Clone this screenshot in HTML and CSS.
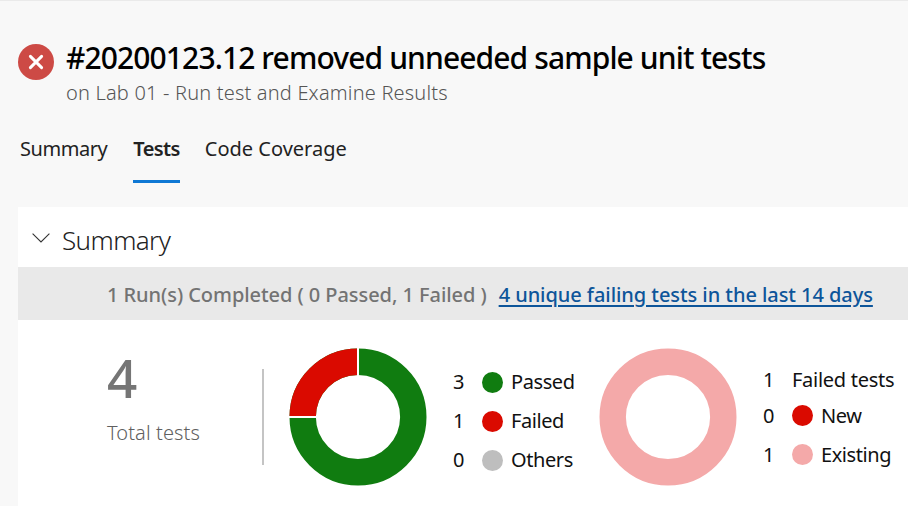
FILE: index.html
```
<!DOCTYPE html>
<html lang="en">
<head>
<meta charset="utf-8">
<title>Test results</title>
<link rel="stylesheet" href="styles.css">
</head>
<body>
<header class="header">
  <svg class="status" viewBox="0 0 36 36"><circle cx="18" cy="18" r="18" fill="#cd4a45"/><path d="M12.4 12.4 23.6 23.6M23.6 12.4 12.4 23.6" stroke="#fff" stroke-width="3" stroke-linecap="round"/></svg>
  <div class="heading">
    <h1 class="title">#20200123.12 removed unneeded sample unit tests</h1>
    <p class="subtitle">on Lab 01 - Run test and Examine Results</p>
  </div>
</header>
<nav class="tabs">
  <a class="tab tab-summary">Summary</a>
  <a class="tab tab-active">Tests</a>
  <a class="tab tab-coverage">Code Coverage</a>
</nav>
<main class="card">
  <div class="section">
    <svg class="chevron" viewBox="0 0 18 10"><path d="M.6.7 9 9 17.4.7" fill="none" stroke="#333" stroke-width="1.1"/></svg>
    <h2 class="section-title">Summary</h2>
  </div>
  <div class="band">
    <span class="runs">1 Run(s) Completed ( 0 Passed, 1 Failed )</span>
    <a class="link">4 unique failing tests in the last 14 days</a>
  </div>
  <div class="stats">
    <div class="total">
      <div class="total-number">4</div>
      <div class="total-label">Total tests</div>
    </div>
    <svg class="donut" viewBox="0 0 138 138">
      <circle cx="69" cy="69" r="55.3" fill="none" stroke="#107c10" stroke-width="26.4"/>
      <path d="M13.7 69A55.3 55.3 0 0 1 69 13.7" fill="none" stroke="#da0a00" stroke-width="26.4"/>
      <path d="M69 0V28M0 69H28" stroke="#fff" stroke-width="2"/>
    </svg>
    <div class="legend">
      <div class="row"><span class="count">3</span><i class="dot passed"></i><span class="name">Passed</span></div>
      <div class="row"><span class="count">1</span><i class="dot failed"></i><span class="name">Failed</span></div>
      <div class="row"><span class="count">0</span><i class="dot others"></i><span class="name">Others</span></div>
    </div>
    <svg class="donut" viewBox="0 0 138 138"><circle cx="69" cy="69" r="55.3" fill="none" stroke="#f4a9a9" stroke-width="26.4"/></svg>
    <div class="legend legend-failed">
      <div class="row row-head"><span class="count">1</span><span class="name">Failed tests</span></div>
      <div class="row"><span class="count">0</span><i class="dot failed"></i><span class="name">New</span></div>
      <div class="row"><span class="count">1</span><i class="dot existing"></i><span class="name">Existing</span></div>
    </div>
  </div>
</main>
</body>
</html>
```
FILE: styles.css
```
* { box-sizing: border-box; }
body {
  margin: 0;
  height: 506px;
  overflow: hidden;
  background: #f8f8f8;
  border-top: 1px solid #eaeaea;
  color: #111;
  font: 20px/30px "Noto Sans", "Open Sans", sans-serif;
  white-space: nowrap;
}
h1, h2, p { margin: 0; }
svg { display: block; flex: none; }
.header { display: flex; padding: 37px 0 0 18px; }
.status { width: 36px; height: 36px; margin: 6px 12px 0 0; }
.title { font-size: 30px; line-height: 40px; font-weight: 500; color: #000; letter-spacing: -0.89px; }
.subtitle { line-height: 30px; font-weight: 300; color: #555; letter-spacing: 0.18px; }
.tabs { display: flex; gap: 26px; padding: 26px 0 0 20px; }
.tab { height: 49px; color: #222; }
.tab-summary { letter-spacing: -0.45px; }
.tab-active { font-weight: 600; letter-spacing: -0.6px; border-bottom: 3px solid #0f78d4; }
.tab-coverage { margin-left: -1px; }
.card { margin: 24px 0 0 18px; height: 299px; background: #fff; }
.section { display: flex; align-items: center; height: 60px; padding: 6px 0 0 14px; }
.chevron { width: 18px; height: 10px; margin: -4px 12px 0 0; }
.section-title { font-size: 26px; line-height: 36px; font-weight: 300; color: #222; letter-spacing: -0.6px; }
.band { display: flex; align-items: center; gap: 12px; height: 53px; padding: 2px 0 0 89px; background: #e9e9e9; font-weight: 500; letter-spacing: -0.06px; }
.runs { color: #737373; }
.link { color: #0d559a; text-decoration: underline; text-decoration-thickness: 2px; text-underline-offset: 3px; }
.stats { display: flex; padding: 28px 0 0 89px; }
.total { width: 157px; height: 96px; margin-top: 21px; border-right: 2px solid #c4c4c4; color: #757575; }
.total-number { font-size: 53px; line-height: 50px; margin-top: -16px; font-weight: 500; }
.total-label { margin-top: 15px; font-weight: 300; color: #606060; letter-spacing: 0.1px; }
.donut { width: 138px; height: 138px; margin-left: 25px; }
.legend { width: 147px; padding: 19px 0 0 26px; }
.row { display: flex; align-items: center; height: 39px; padding-bottom: 9px; }
.count { width: 29px; flex: none; }
.name { letter-spacing: -0.42px; }
.dot { width: 21px; height: 21px; margin: 1px 8px 0 0; border-radius: 50%; flex: none; }
.passed { background: #107c10; }
.failed { background: #da0a00; }
.others { background: #bebebe; }
.existing { background: #f4a9a9; }
.legend-failed { padding-top: 17px; }
.legend-failed .dot { margin-top: -1px; }
.row-head { height: 36px; padding-bottom: 6px; }
.row-head .name { letter-spacing: -0.27px; }
```
